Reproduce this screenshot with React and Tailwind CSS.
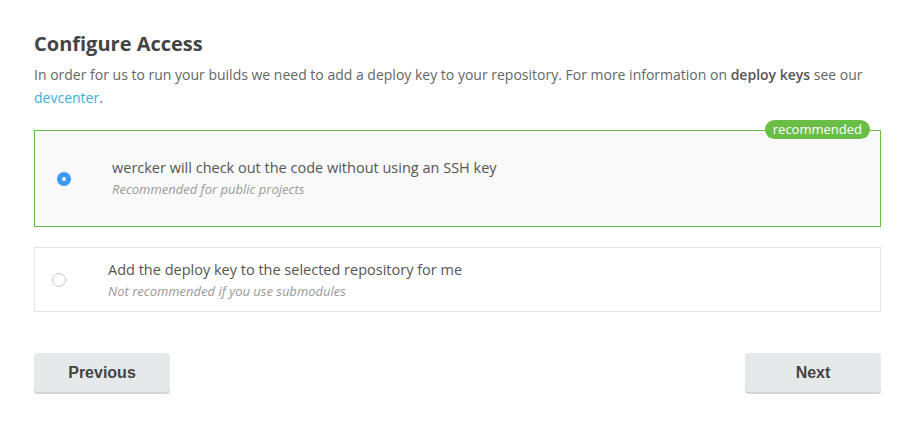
export default function App() {
  return (
    <div className="min-h-[442px] bg-white pl-[34px] pr-[27px] pt-[31px] font-['Open_Sans',sans-serif] text-[#555]">
      <h2 className="text-[20px] font-bold leading-[26px] text-[#444]">Configure Access</h2>
      <p className="mt-[6px] text-[14px] leading-[23px] text-[#666]">
        In order for us to run your builds we need to add a deploy key to your repository. For more information on{' '}
        <b className="font-semibold text-[#555]">deploy keys</b> see our{' '}
        <a href="#" className="text-[#3ab0e2]">devcenter</a>.
      </p>

      <div className="relative mt-[21px] flex h-[97px] items-center border border-[#6abd45] bg-[#f9f9f9]">
        <span className="absolute right-[10px] top-[-11px] rounded-full bg-[#6abd45] px-[8px] text-[13px] leading-[19px] text-white">
          recommended
        </span>
        <div className="ml-[22px] flex h-[14px] w-[14px] items-center justify-center rounded-full bg-[#3b99fc]">
          <div className="h-[4px] w-[4px] rounded-full bg-white" />
        </div>
        <div className="ml-[41px] mb-[2px]">
          <div className="text-[14.5px] leading-[22px] text-[#555]">wercker will check out the code without using an SSH key</div>
          <div className="text-[13px] italic leading-[20px] text-[#999]">Recommended for public projects</div>
        </div>
      </div>

      <div className="mt-[20px] flex h-[65px] items-center border border-[#e3e3e3] bg-white">
        <div className="ml-[17px] h-[14px] w-[14px] rounded-full border border-[#c8c8c8] bg-white" />
        <div className="ml-[42px]">
          <div className="text-[14.5px] leading-[22px] text-[#555]">Add the deploy key to the selected repository for me</div>
          <div className="text-[13px] italic leading-[20px] text-[#999]">Not recommended if you use submodules</div>
        </div>
      </div>

      <div className="mt-[41px] flex justify-between font-['Liberation_Sans',sans-serif]">
        <button className="h-[39px] w-[136px] rounded-[3px] bg-[#e6e9ea] text-[16px] font-bold text-[#444] shadow-[0_2px_0_#d4d7d8]">
          Previous
        </button>
        <button className="h-[39px] w-[136px] rounded-[3px] bg-[#e6e9ea] text-[16px] font-bold text-[#444] shadow-[0_2px_0_#d4d7d8]">
          Next
        </button>
      </div>
    </div>
  );
}
